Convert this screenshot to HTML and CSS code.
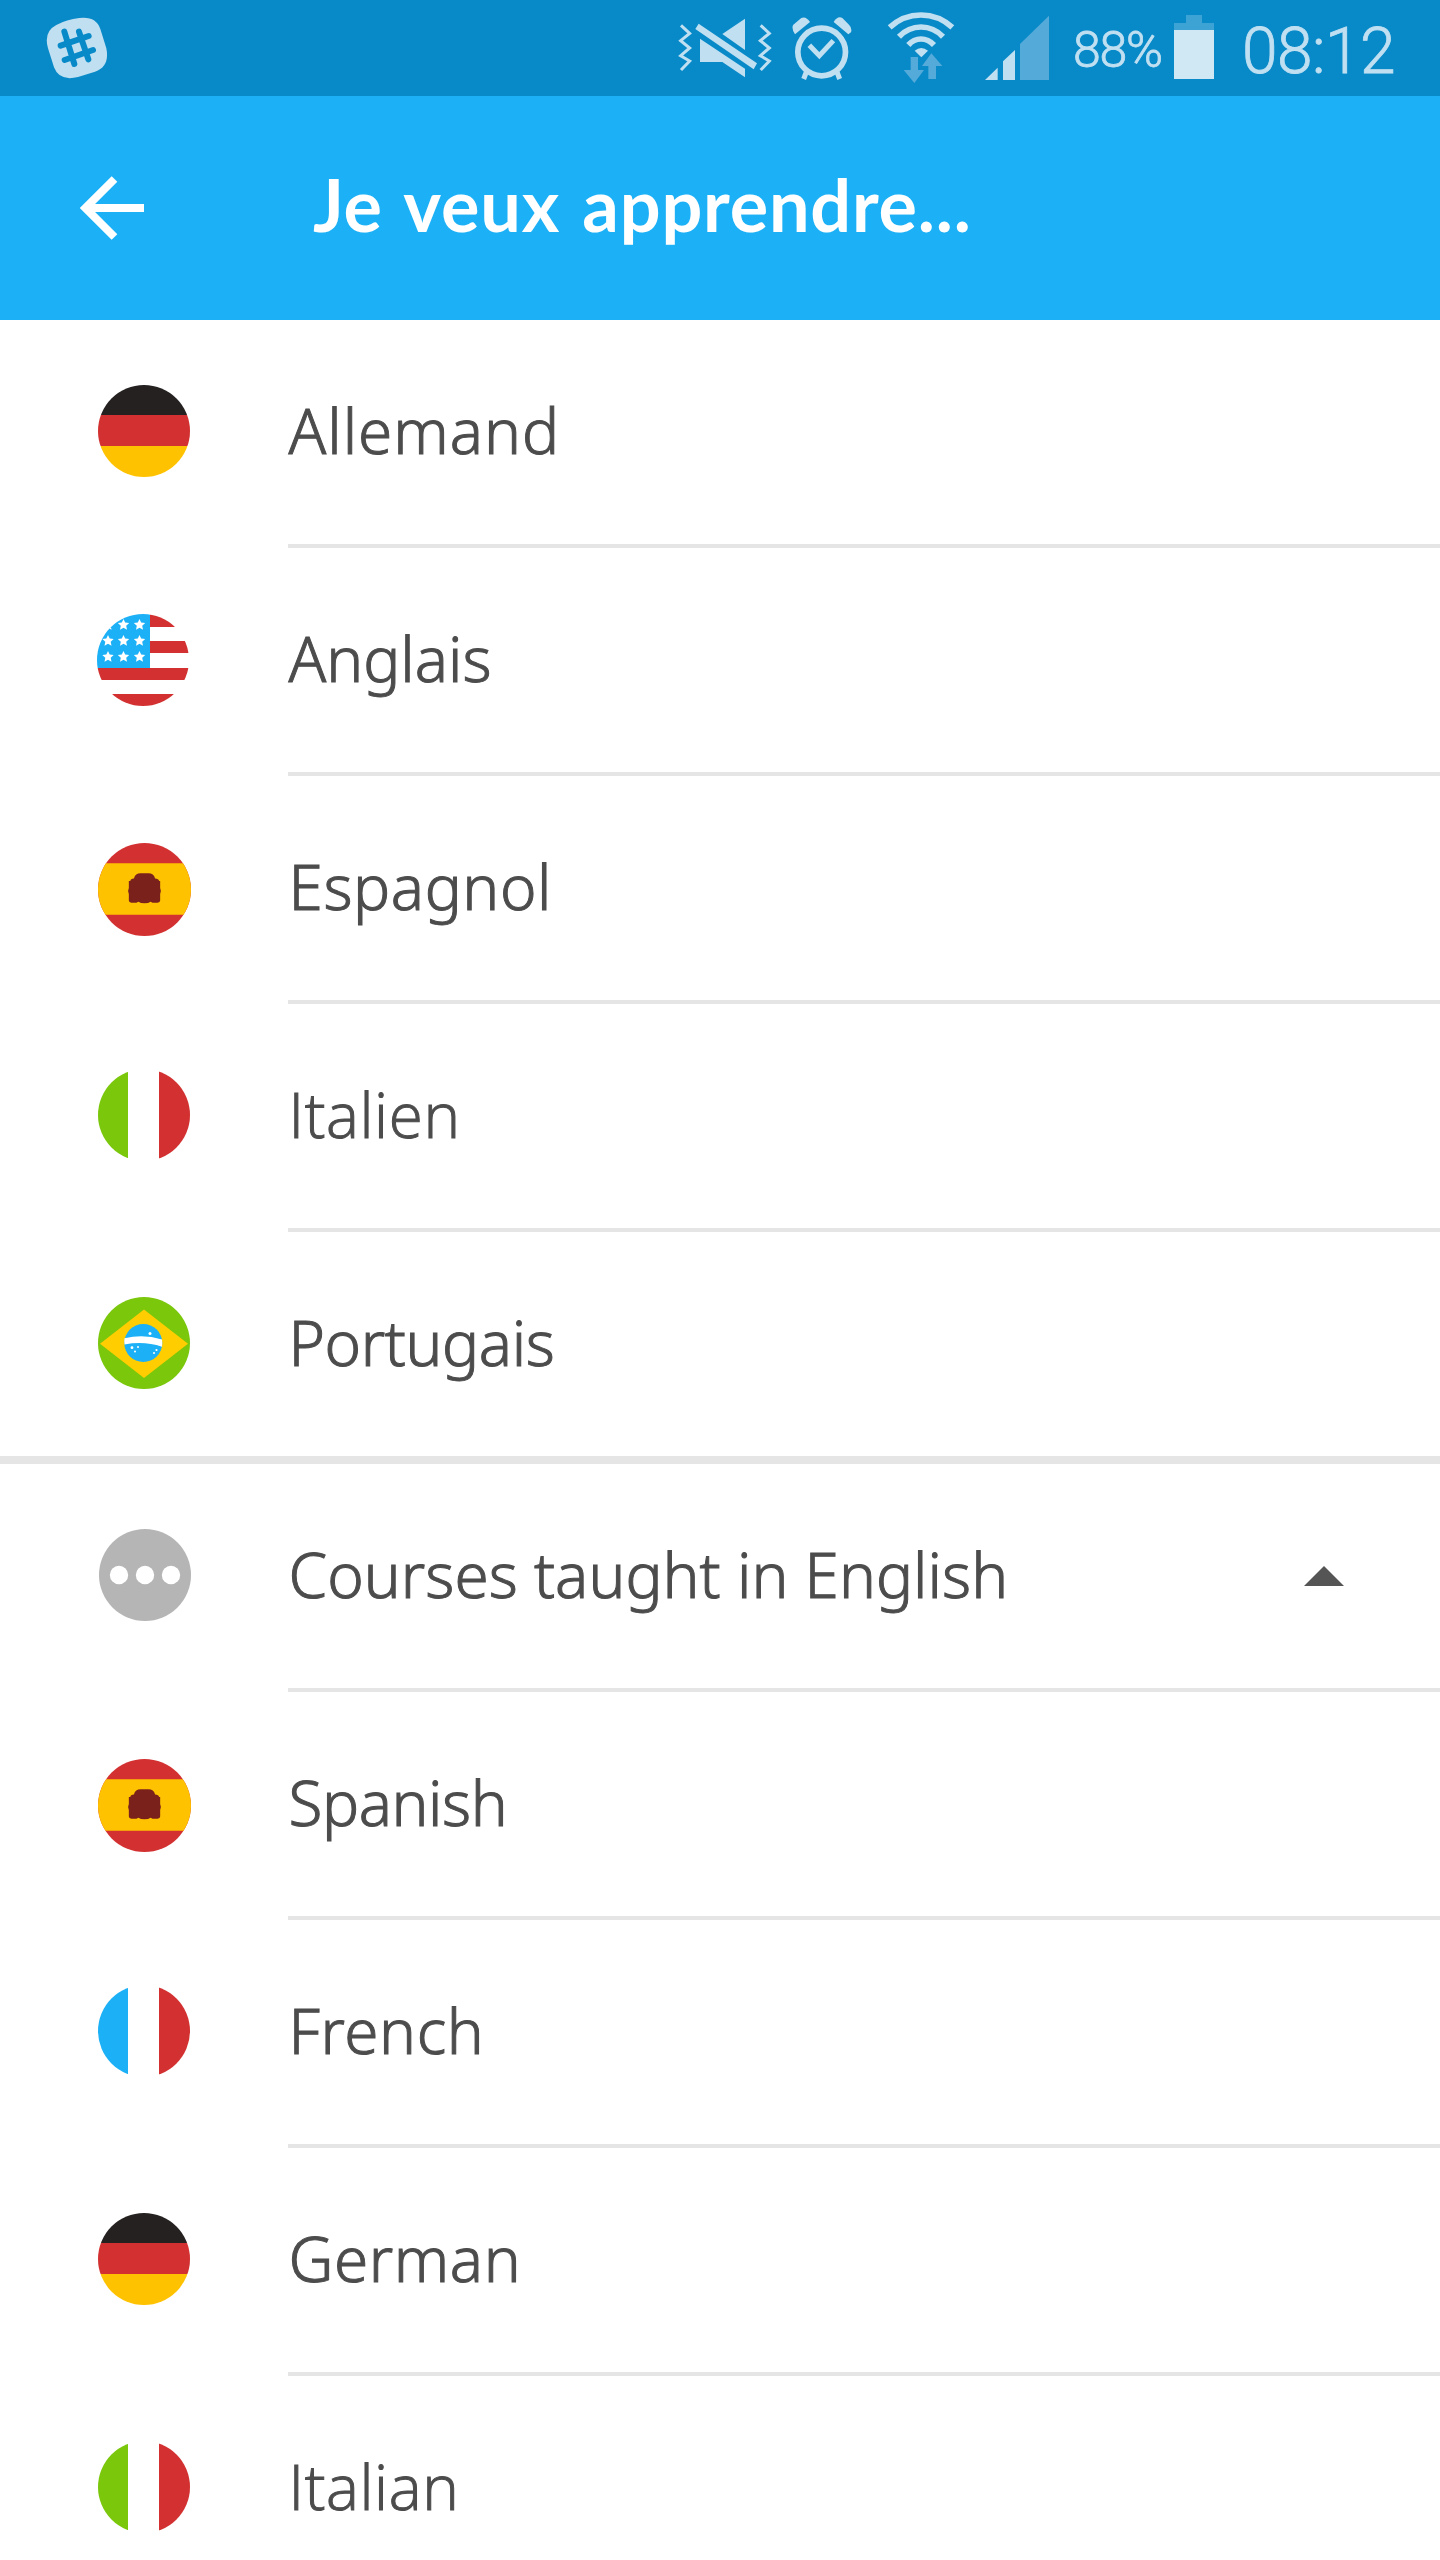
FILE: index.html
```html
<!DOCTYPE html>
<html lang="fr">
<head>
<meta charset="utf-8">
<title>Je veux apprendre...</title>
<link rel="stylesheet" href="styles.css">
</head>
<body>
<svg class="defs" width="0" height="0" aria-hidden="true">
  <defs>
    <clipPath id="disc"><circle cx="46" cy="46" r="46"/></clipPath>
    <path id="star" d="M0-5.6 1.7-1.9 5.7-1.5 2.7 1.3 3.5 5.2 0 3.3-3.5 5.2-2.7 1.3-5.7-1.5-1.7-1.9Z" fill="#fff"/>
    <symbol id="flag-de" viewBox="0 0 92 92"><g clip-path="url(#disc)"><path fill="#252120" d="M0 0h92v30H0z"/><path fill="#d33131" d="M0 30h92v31H0z"/><path fill="#ffc200" d="M0 61h92v31H0z"/></g></symbol>
    <symbol id="flag-it" viewBox="0 0 92 92"><g clip-path="url(#disc)"><path fill="#fff" d="M0 0h92v92H0z"/><path fill="#7ac70c" d="M0 0h30v92H0z"/><path fill="#d33131" d="M61 0h31v92H61z"/></g></symbol>
    <symbol id="flag-fr" viewBox="0 0 92 92"><g clip-path="url(#disc)"><path fill="#fff" d="M0 0h92v92H0z"/><path fill="#1cb0f6" d="M0 0h30v92H0z"/><path fill="#d33131" d="M61 0h31v92H61z"/></g></symbol>
    <symbol id="flag-es" viewBox="0 0 92 92"><g clip-path="url(#disc)"><path fill="#d33131" d="M0 0h92v92H0z"/><path fill="#ffc200" d="M0 20h92v51H0z"/><path fill="#7b211c" d="M42 30h8q5 0 6.500 5 3.500 0 4 2.500h1v7q1.500 3 0 6V57q0 2-2.500 2h-5l-2-1q-2 1.500-6 1.500T40 58l-2 1h-5q-2.500 0-2.500-2v-6.500q-1.500-3 0-6v-7h1.500q0-2.500 3.500-2.500Q37 30 42 30z"/></g></symbol>
    <symbol id="flag-us" viewBox="0 0 92 92"><g clip-path="url(#disc)"><path fill="#fff" d="M0 0h92v92H0z"/><path fill="#d33131" d="M53 0h39v13H53zM53 27h39v12H53zM0 54h92v12H0zM0 80h92v12H0z"/><path fill="#1cb0f6" d="M0 0h53v54H0z"/>
      <use href="#star" x="11" y="10.500"/><use href="#star" x="26.500" y="10.500"/><use href="#star" x="42.500" y="10.500"/><use href="#star" x="11" y="26.500"/><use href="#star" x="26.500" y="26.500"/><use href="#star" x="42.500" y="26.500"/><use href="#star" x="11" y="42.500"/><use href="#star" x="26.500" y="42.500"/><use href="#star" x="42.500" y="42.500"/></g></symbol>
    <symbol id="flag-br" viewBox="0 0 92 92"><circle cx="46" cy="46" r="46" fill="#7ac70c"/><path fill="#ffcd00" d="M46 12.500 90 46.800 46 81 2 46.800z"/><circle cx="45.300" cy="46" r="19" fill="#1cb0f6"/><path fill="#fff" d="M26.500 41.300q19-4.500 37.500 1.200.5 3.500 0 7.200-18-6-37.500-2.200-.5-3 0-6.200z"/><g fill="#fff"><circle cx="52" cy="36.500" r="1.500"/><circle cx="34" cy="50.700" r="1.400"/><circle cx="40" cy="50" r="1"/><circle cx="37" cy="54.500" r="1"/><circle cx="58.500" cy="53" r="1.100"/><circle cx="56" cy="56" r="1"/></g></symbol>
    <symbol id="more" viewBox="0 0 92 92"><circle cx="46" cy="46" r="46" fill="#b5b5b5"/><g fill="#fff"><circle cx="20" cy="46" r="9.200"/><circle cx="46" cy="46" r="9.200"/><circle cx="72" cy="46" r="9.200"/></g></symbol>
  </defs>
</svg>

<div class="status">
  <svg class="slack" viewBox="78 0 186 288"><path fill="#c0e0f2" d="M178 54Q228 48 241 87L259 145Q270 199 225 215L174 231Q118 245 102 202L84 145Q70 95 109 75Q140 58 178 54Z"/><path d="M133 95 163 192M177 95 205 178M122 137 206 108M134 180 219 150" fill="none" stroke="#098ac8" stroke-width="18" stroke-linecap="round"/></svg>
  <svg class="vibrate" viewBox="54 0 282 288"><g fill="none" stroke="#c0e0f2" stroke-width="9"><path d="M63 76 89 100 62 122 89 144 62 167 89 183 63 210"/><path d="M302 76 328 100 301 122 328 144 301 167 328 183 302 210"/></g><path d="M255 56V150L187 102ZM120 116 255 206V232L187 186H120ZM116 71 291 190 281 208 106 87Z" fill="#c0e0f2"/></svg>
  <svg class="alarm" viewBox="393 0 183 288"><g fill="none" stroke="#c0e0f2"><circle cx="485" cy="156" r="71.500" stroke-width="17"/><path d="M448 136 478 167 520 122" stroke-width="15"/><path d="M439 216 431 237M531 216 539 237" stroke-width="15"/></g><path fill="#c0e0f2" d="M405 103Q393 84 400 74L424 54Q438 48 450 66ZM565 103 521 66Q533 47 547 54L567 74Q577 84 573 97Z"/></svg>
  <svg class="wifi" viewBox="681 0 204 288"><g fill="none" stroke="#c0e0f2" stroke-width="17"><path d="M689 82Q730 45 783 45T877 82"/><path d="M717 110Q745 81 783 81T849 110"/><path d="M745 135Q761 117 783 117T822 135"/></g><path fill="#c0e0f2" d="M764 152Q784 136 804 152L784 172Z"/><path fill="#54aad9" d="M752 171H774V210H792L763 249 731 210H752ZM814 160 847 198H828V237H805V198H786Z"/></svg>
  <svg class="signal" viewBox="972 0 198 288"><path fill="#c0e0f2" d="M975 240 1013 203V240ZM1029 184 1065 150V240H1029Z"/><path fill="#54aad9" d="M1080 132 1167 47V240H1080Z"/></svg>
  <span class="percent">88%</span>
  <svg class="battery" viewBox="402 0 120 288"><path fill="#3da2d4" d="M438 45H486V69H522V90H402V69H438Z"/><path fill="#d0e7f4" d="M402 90H522V237H402Z"/></svg>
  <span class="clock">08:12</span>
</div>

<header class="bar">
  <svg class="back" viewBox="0 0 64 64"><path fill="none" stroke="#fff" stroke-width="8" d="M64 32H6M34.500 3 5.500 32 34.500 61"/></svg>
  <h1 class="title">Je veux apprendre...</h1>
</header>

<main>
  <div class="row"><svg class="flag"><use href="#flag-de"/></svg><div class="cell wide">Allemand</div></div>
  <div class="row"><svg class="flag us"><use href="#flag-us"/></svg><div class="cell">Anglais</div></div>
  <div class="row"><svg class="flag es"><use href="#flag-es"/></svg><div class="cell roomy">Espagnol</div></div>
  <div class="row"><svg class="flag"><use href="#flag-it"/></svg><div class="cell plain-i">Italien</div></div>
  <div class="row last"><svg class="flag"><use href="#flag-br"/></svg><div class="cell tight">Portugais</div></div>
  <div class="row"><svg class="flag more"><use href="#more"/></svg><div class="cell group">Courses taught in English<svg class="caret" viewBox="0 0 40 20"><path fill="#555" d="M20 0 40 20H0z"/></svg></div></div>
  <div class="row"><svg class="flag es"><use href="#flag-es"/></svg><div class="cell tight">Spanish</div></div>
  <div class="row"><svg class="flag"><use href="#flag-fr"/></svg><div class="cell roomy">French</div></div>
  <div class="row"><svg class="flag"><use href="#flag-de"/></svg><div class="cell roomy">German</div></div>
  <div class="row"><svg class="flag"><use href="#flag-it"/></svg><div class="cell plain-i">Italian</div></div>
</main>
</body>
</html>
```
FILE: styles.css
```css
* { box-sizing: border-box; }
body { margin: 0; width: 1440px; height: 2560px; overflow: hidden; background: #fff; color: #4c4c4c; font-family: "Noto Sans", sans-serif; }
.defs { position: absolute; }
.status { display: flex; height: 96px; background: #098ac8; color: #c0e0f2; font-family: Roboto, sans-serif; font-weight: 300; white-space: nowrap; -webkit-text-stroke: 0.8px #c0e0f2; }
.status svg { height: 96px; flex: none; }
.slack { width: 62px; margin-left: 46px; }
.vibrate { width: 94px; margin-left: 570px; }
.alarm { width: 61px; margin-left: 19px; }
.wifi { width: 68px; margin-left: 35px; }
.signal { width: 66px; margin-left: 29px; }
.percent { width: 101px; margin-left: 23px; font-size: 50px; line-height: 100px; letter-spacing: -1.2px; }
.battery { width: 40px; }
.clock { margin-left: 28px; font-size: 64px; line-height: 103px; letter-spacing: -0.5px; }
.bar { display: flex; align-items: center; height: 224px; padding-left: 80px; background: #1cb0f6; color: #fff; }
.back { width: 64px; height: 64px; }
.title { margin: 0 0 0 169px; padding-bottom: 8px; font-family: Lato, sans-serif; font-size: 72px; font-weight: 700; line-height: 86px; letter-spacing: 0.8px; word-spacing: 4px; white-space: nowrap; }
.row { display: flex; height: 228px; }
.flag { width: 92px; height: 92px; margin: 65px 98px 0 98px; flex: none; }
.flag.us { margin: 66px 99px 0 97px; }
.flag.es { width: 93px; height: 93px; margin: 67px 97px 0 98px; }
.flag.more { margin: 65px 97px 0 99px; }
.cell { display: flex; align-items: center; flex: 1; padding: 0 0 5px 1px; border-bottom: 4px solid #e5e5e5; font-size: 62px; font-weight: 300; white-space: nowrap; -webkit-text-stroke: 1px #4c4c4c; }
.row .cell { padding-left: 0; text-indent: 0.5px; }
.wide { letter-spacing: 1px; }
.roomy { letter-spacing: 0.6px; }
.tight { letter-spacing: -0.4px; }
.group { letter-spacing: 0.05px; }
.plain-i { font-family: "Open Sans", sans-serif; letter-spacing: 0.6px; }
.caret { width: 40px; height: 20px; margin: 5px 96px 0 auto; }
.last { height: 232px; border-bottom: 8px solid #e5e5e5; }
.last .cell { border-bottom: 0; }
```
